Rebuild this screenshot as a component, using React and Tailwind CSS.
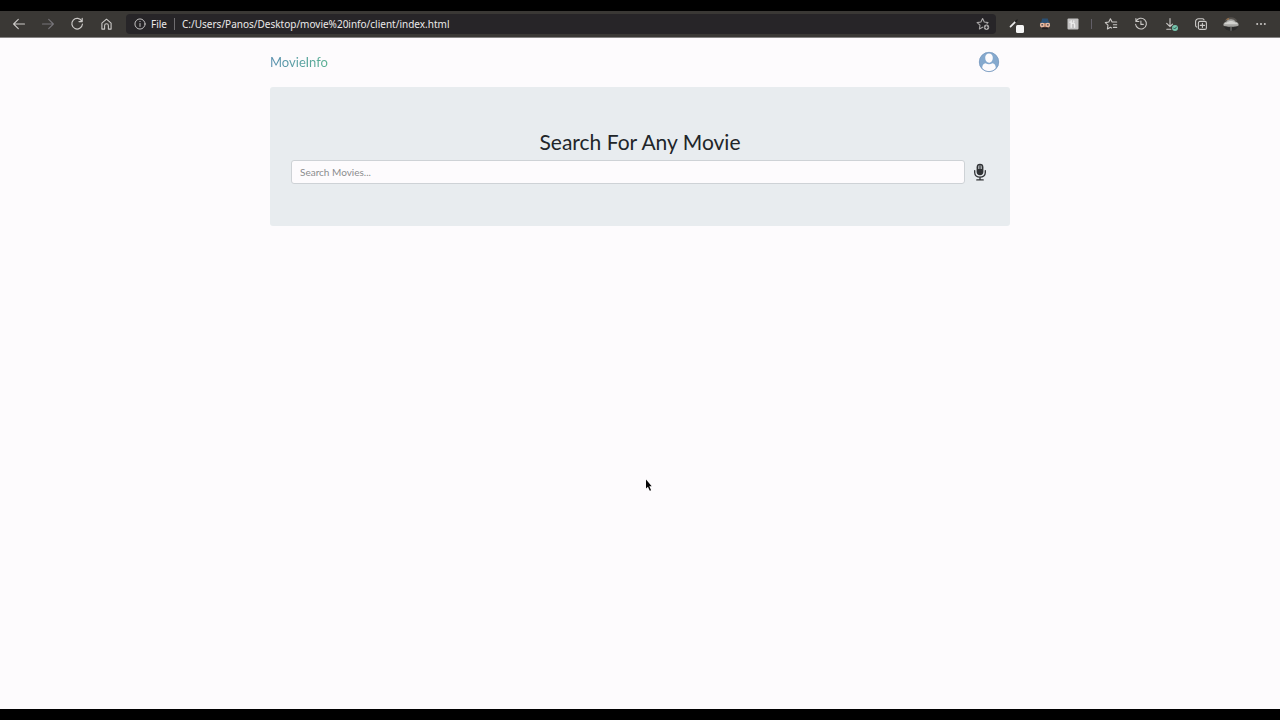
import React from "react";

const line = {
  fill: "none",
  stroke: "currentColor",
  strokeLinecap: "round",
  strokeLinejoin: "round",
};

function Icon({ children, width = 1.1, className = "h-4 w-4" }) {
  return (
    <svg viewBox="0 0 16 16" aria-hidden="true" className={className} {...line} strokeWidth={width}>
      {children}
    </svg>
  );
}

function ToolButton({ label, className = "w-[29px]", disabled, children }) {
  return (
    <button
      type="button"
      aria-label={label}
      disabled={disabled}
      className={`flex h-full shrink-0 items-center justify-center ${className}`}
    >
      {children}
    </button>
  );
}

function BrowserBar() {
  return (
    <header className="flex h-[27px] items-center border-b border-[#858383] bg-[#3a3835] text-[#cbc9c7]">
      <nav className="flex h-full items-center pl-1 pr-[6px]">
        <ToolButton label="Back">
          <Icon>
            <path d="M13.5 8H2.8M7.3 3.3L2.6 8l4.7 4.7" />
          </Icon>
        </ToolButton>
        <ToolButton label="Forward" disabled className="w-[29px] text-[#77757a]">
          <Icon>
            <path d="M2.5 8h10.7M8.7 3.3L13.4 8l-4.7 4.7" />
          </Icon>
        </ToolButton>
        <ToolButton label="Refresh">
          <Icon width={1.2}>
            <path d="M12.8 5.2A5.3 5.3 0 1 0 13.4 8.2M13.2 2.4v3.2H10" />
          </Icon>
        </ToolButton>
        <ToolButton label="Home">
          <Icon>
            <path d="M3.9 7.1L8.5 3.2l4.6 3.9v6h-2.7V9.7a1.9 1.9 0 0 0-3.8 0v3.4H3.9z" />
          </Icon>
        </ToolButton>
      </nav>

      <div className="flex h-5 min-w-0 flex-1 items-center rounded-sm bg-[#272528] pl-[7px] pr-[5px] font-['Noto_Sans',sans-serif] text-[10px] text-[#eceaea]">
        <Icon className="h-[14px] w-[14px] shrink-0 text-[#c9c7c7]">
          <circle cx="8" cy="8" r="5.8" />
          <path d="M8 7.4v3.4M8 5.1v.2" />
        </Icon>
        <span className="ml-1 w-4">File</span>
        <span className="ml-[7px] h-3 w-px bg-[#6f6d70]" />
        <input
          type="text"
          aria-label="Address"
          readOnly
          value="C:/Users/Panos/Desktop/movie%20info/client/index.html"
          className="ml-[7px] min-w-0 flex-1 bg-transparent outline-none"
        />
        <button type="button" aria-label="Add to favorites" className="text-[#a9a7a7]">
          <Icon>
            <path d="M7.6 11.2L4.4 13l.6-3.8-2.9-2.6 3.8-.6L7.6 2.6 9.3 6l3.7.6-1 1" />
            <circle cx="11.5" cy="11.3" r="2.7" fill="#a9a7a7" stroke="none" />
            <path d="M11.5 10v2.6M10.2 11.3h2.6" stroke="#272528" strokeWidth="0.8" />
          </Icon>
        </button>
      </div>

      <div className="flex h-full items-center pl-[6px]">
        <ToolButton label="Color picker">
          <svg viewBox="0 0 16 18" aria-hidden="true" className="mt-[3px] h-[18px] w-4">
            <path d="M1.5 9.6L6 5.2" stroke="#e8e8e8" strokeWidth="1.7" strokeLinecap="round" />
            <path d="M5.8 4.2l2.3-2 .8.9-2 2.3z" fill="#1c1c1d" />
            <rect x="7" y="8" width="8" height="8" rx="1.5" fill="#f5f5f5" />
          </svg>
        </ToolButton>
        <ToolButton label="Agent extension" className="w-[27px]">
          <svg viewBox="0 0 16 16" aria-hidden="true" className="h-4 w-4">
            <path d="M4.3 5.8L5.2 2.6h5.6l.9 3.2 1.5 1.3H2.8z" fill="#2b5074" />
            <path d="M3.4 7h9.2v3.1L10.4 13H5.6l-2.2-2.9z" fill="#b37d66" />
            <path d="M5 11.2h6V13.2H5z" fill="#241f22" />
            <circle cx="5.2" cy="9" r="2.3" fill="#e6bba6" />
            <circle cx="10.8" cy="9" r="2.3" fill="#e6bba6" />
            <path d="M4.4 8.9h1.7M9.9 8.9h1.7" stroke="#393c46" strokeWidth="1.3" />
          </svg>
        </ToolButton>
        <ToolButton label="Honey" className="w-[30px]">
          <svg viewBox="0 0 16 16" aria-hidden="true" className="h-4 w-4">
            <rect x="2.5" y="2.5" width="11" height="11" rx="1" fill="#c4c3c3" />
            <path
              d="M6.2 4.6v6.7M6.2 8.1c1-1.4 3.4-1.3 3.4.6v2.6M8.8 4.9v1M4.8 6.2h1.3"
              fill="none"
              stroke="#ededed"
              strokeWidth="1.3"
              strokeLinecap="round"
            />
          </svg>
        </ToolButton>
        <span className="ml-[3px] mr-1 h-[10px] w-px bg-[#625f68]" />
        <ToolButton label="Favorites" className="w-[30px]">
          <Icon>
            <path d="M7.4 11.3L4.4 13 5 9.2 2.3 6.6 5.8 6l1.6-3.2L9.1 6h4.6M10.4 8.8h3.3M10.4 11.4h3.3M7.4 11.3l1.2.6" />
          </Icon>
        </ToolButton>
        <ToolButton label="History" className="w-[30px]">
          <Icon>
            <path d="M3.1 5.3a5.4 5.4 0 1 1-.5 2.9M2.9 2.5v3h3M7.9 5.1v3.3h2.4" />
          </Icon>
        </ToolButton>
        <ToolButton label="Downloads" className="w-[30px]">
          <Icon>
            <path d="M7 2.5v8M3.7 7.4L7 10.7l2.5-2.5M3.8 13.2h4" />
            <circle cx="12" cy="12" r="3" fill="#75c4ad" stroke="none" />
            <path d="M10.6 12l1 1 1.9-2" stroke="#29473f" strokeWidth="0.9" />
          </Icon>
        </ToolButton>
        <ToolButton label="Collections" className="w-[30px]">
          <Icon>
            <rect x="5.4" y="5.4" width="8" height="8" rx="1.5" />
            <path d="M9.4 7.3v4.2M7.3 9.4h4.2M3.8 11.1c-.8-.3-1.2-.8-1.2-1.6V5.6a2.9 2.9 0 0 1 2.9-2.9h3.8c.9 0 1.4.4 1.7 1.1" />
          </Icon>
        </ToolButton>
        <ToolButton label="Profile" className="w-[30px]">
          <svg viewBox="0 0 16 16" aria-hidden="true" className="h-4 w-4">
            <path d="M1.6 5.2C3.2 2.2 5.3 1.2 8 1.2c3 0 5.3 1.5 6.4 4z" fill="#57534f" />
            <path d="M2.8 3.6c1-1 2.3-1.6 3.4-1.5L5.6 4.4z" fill="#8d6b48" />
            <path d="M.3 9.2C.3 7 1.8 6 3.4 5.6 4.4 3.9 6 3.1 8 3.2c1.9 0 3.6.8 4.4 2.4 2 .3 3.3 1.5 3.3 3.6-.9 2-14.5 2-15.4 0z" fill="#a5a5a2" />
            <path d="M3.8 6.4c2-2 6.4-2 8.4 0 1.3.1 2.3.8 2.6 1.8H1.2c.4-1 1.3-1.7 2.6-1.8z" fill="#d2d2cf" />
            <path d="M1 10.6c3.8.9 10.4.9 14 0-1 2.8-3.4 4.2-7 4.4-3.8-.1-6.1-1.6-7-4.4z" fill="#2b2b2b" />
            <path d="M8 10v4.8" stroke="#858583" strokeWidth="1" />
          </svg>
        </ToolButton>
        <ToolButton label="Settings and more" className="mr-1 w-[30px]">
          <svg viewBox="0 0 16 16" aria-hidden="true" className="h-4 w-4" fill="currentColor">
            <circle cx="4.2" cy="8" r="1" />
            <circle cx="8" cy="8" r="1" />
            <circle cx="11.8" cy="8" r="1" />
          </svg>
        </ToolButton>
      </div>
    </header>
  );
}

export default function App() {
  return (
    <div className="relative flex min-h-screen flex-col bg-[#fdfbfd] font-['Lato',sans-serif] text-[#212529]">
      <div className="h-[11px] bg-black" />
      <BrowserBar />

      <div className="mx-auto w-full max-w-[740px] flex-1">
        <nav className="flex h-[49px] items-center justify-between pb-[2px] pr-[10px]">
          <a
            href="#home"
            className="bg-gradient-to-r from-[#588eae] to-[#58b091] bg-clip-text text-[13px] leading-5 text-transparent"
          >
            MovieInfo
          </a>
          <button type="button" aria-label="Account">
            <svg viewBox="0 0 22 22" aria-hidden="true" className="h-[22px] w-[22px]">
              <circle cx="11" cy="11" r="10" fill="#85a9ce" />
              <path
                d="M11 2.4c2.4 0 3.8 1.8 3.8 4.3 0 2.7-1.5 5-3.8 5s-3.8-2.3-3.8-5c0-2.5 1.4-4.3 3.8-4.3z"
                fill="#fdfbfd"
              />
              <path
                d="M4.2 17.3c.1-3.1 1-4.5 3.4-5.1 2 1.4 4.8 1.4 6.8 0 2.4.6 3.3 2 3.4 5.1-1.8 2-4 3-6.8 3s-5-1-6.8-3z"
                fill="#fdfbfd"
              />
              <circle cx="11" cy="11" r="9.7" fill="none" stroke="#7898bd" strokeWidth="0.7" />
            </svg>
          </button>
        </nav>

        <main className="rounded-[3px] bg-[#e8ecef] px-[21px] pb-[42px] pt-[42px]">
          <h1 className="text-center text-[21px] leading-[26px]">Search For Any Movie</h1>
          <form className="mt-[5px] flex items-center" onSubmit={(e) => e.preventDefault()}>
            <input
              type="text"
              aria-label="Search movies"
              placeholder="Search Movies..."
              className="h-6 min-w-0 flex-1 rounded-[3px] border border-[#ced2d6] bg-[#fdfbfd] px-2 text-[10px] outline-none placeholder:text-[#8b8c8e]"
            />
            <button type="button" aria-label="Voice search" className="ml-[7px] mr-px text-[#303235]">
              <svg viewBox="0 0 16 20" aria-hidden="true" className="h-5 w-4">
                <rect x="4.6" y="1.8" width="6.8" height="11.4" rx="3.4" fill="currentColor" />
                <path d="M6 7V5.2c0-1.3.6-2 1.5-2.2v4zM8.5 7V3c.9.2 1.5.9 1.5 2.2V7z" fill="#a4a8ac" />
                <path
                  d="M2.7 8.6v1.9c0 3 2.3 4.7 5.3 4.7s5.3-1.7 5.3-4.7V8.6M8 15.2v2.3M4.8 17.9h6.4"
                  fill="none"
                  stroke="currentColor"
                  strokeWidth="1.3"
                  strokeLinecap="round"
                />
              </svg>
            </button>
          </form>
        </main>
      </div>

      <div className="h-[11px] bg-black" />

      <svg
        viewBox="0 0 8 13"
        aria-hidden="true"
        className="pointer-events-none absolute left-[645px] top-[479px] h-[13px] w-2"
      >
        <path d="M1 .5v9l1.9-1.7 1.9 4 1.3-.6-1.8-3.9h2.4z" fill="#050505" />
      </svg>
    </div>
  );
}
